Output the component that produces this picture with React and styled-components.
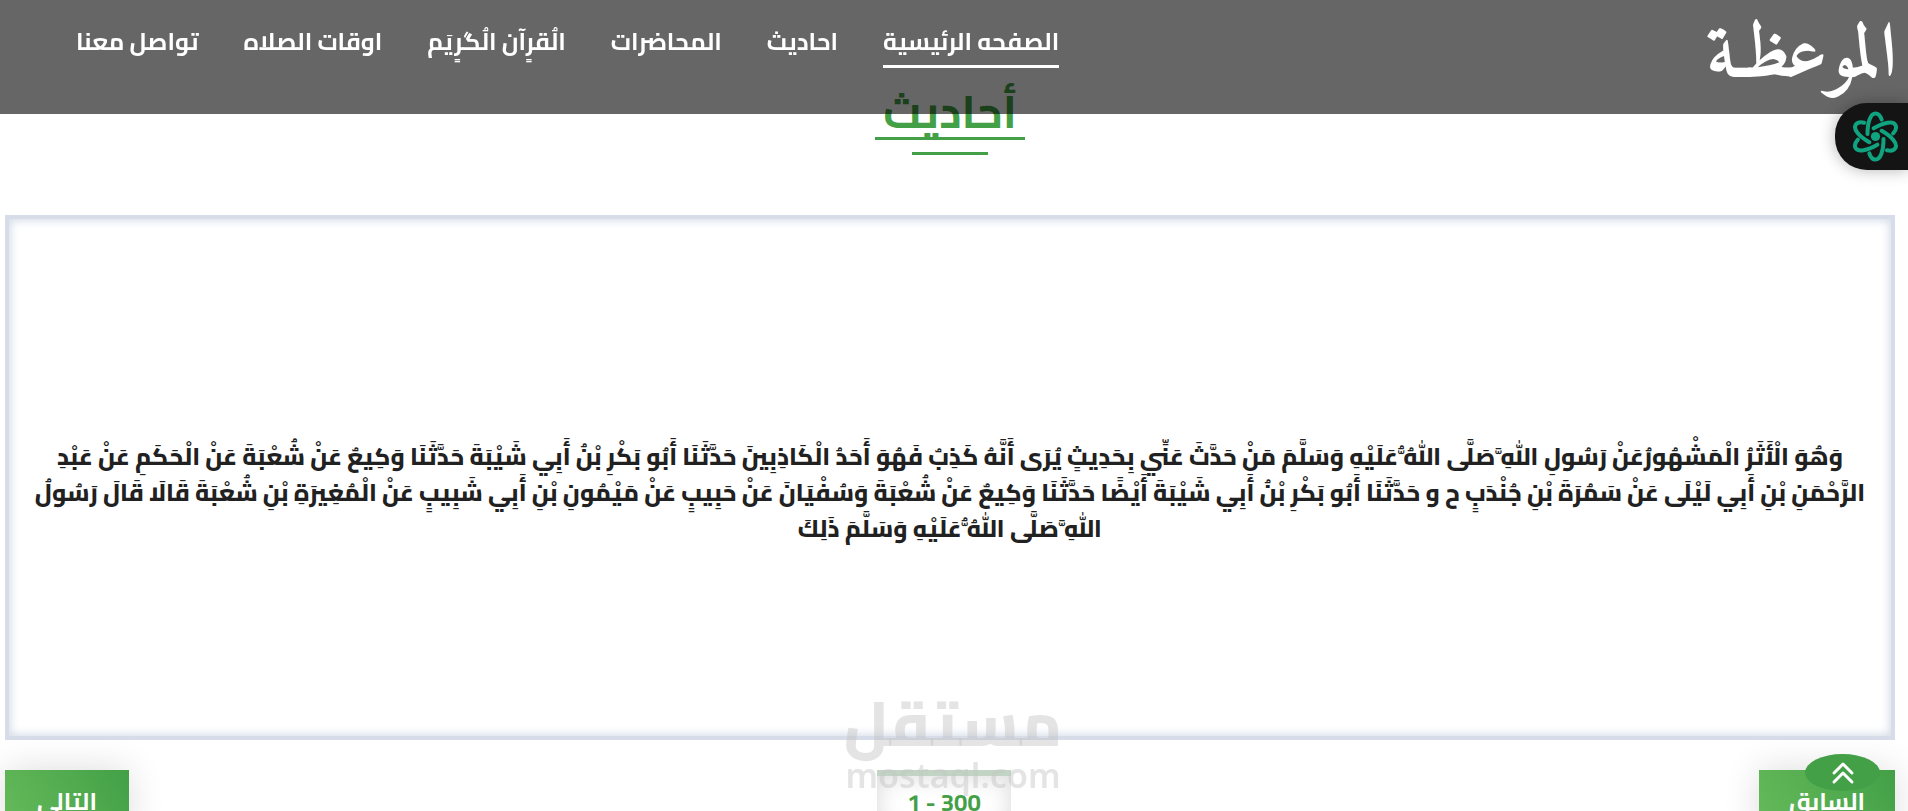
import React from "react";
import styled, { createGlobalStyle, css } from "styled-components";

const GlobalStyle = createGlobalStyle`
  * { box-sizing: border-box; }
  body {
    margin: 0;
    background: #fff;
    color: #212121;
    font-family: Cairo, "DejaVu Sans Condensed", "DejaVu Sans", sans-serif;
    font-weight: 700;
  }
`;

const Page = styled.div`
  height: 100vh;
  overflow: hidden;
`;

const Header = styled.header`
  position: fixed;
  inset: 0 0 auto 0;
  z-index: 10;
  height: 114px;
  display: flex;
  justify-content: space-between;
  align-items: flex-start;
  padding: 0 11px 0 76px;
  background: rgba(0, 0, 0, 0.6);
`;

const Logo = styled.a`
  color: #fff;
  font-family: Amiri, "Scheherazade New", "Noto Naskh Arabic", "Aref Ruqaa", Cairo, "DejaVu Sans", serif;
  font-size: 76px;
  line-height: 116px;
  font-weight: 700;
  text-decoration: none;
`;

const Nav = styled.nav`
  display: flex;
  gap: 45px;
  padding-top: 20px;
`;

const NavLink = styled.a`
  color: #fff;
  font-size: 24px;
  line-height: 43px;
  padding-bottom: 2px;
  white-space: nowrap;
  text-decoration: none;
  border-bottom: 3px solid ${(p) => (p.$active ? "#fff" : "transparent")};
`;

const Main = styled.main`
  padding: 86px 13px 0 5px;
`;

const Title = styled.h1`
  width: 150px;
  margin: 0 auto;
  color: #43a047;
  font-size: 45px;
  line-height: 51px;
  text-align: center;
  white-space: nowrap;
  border-bottom: 3px solid #43a047;
`;

const TitleRule = styled.hr`
  width: 76px;
  height: 3px;
  margin: 12px auto 60px;
  border: 0;
  background: #43a047;
`;

const HadithBox = styled.section`
  height: 525px;
  display: flex;
  align-items: center;
  justify-content: center;
  border: 4px solid #d6dde8;
  box-shadow: inset 0 0 8px 2px #d6dde8;
`;

const HadithText = styled.p`
  margin: 0;
  padding-top: 30px;
  font-size: 24px;
  font-weight: 800;
  line-height: 36px;
  text-align: center;
  white-space: nowrap;
`;

const Pager = styled.div`
  display: flex;
  justify-content: space-between;
  align-items: flex-start;
  margin-top: 30px;
`;

const pagerItem = css`
  height: 64px;
  padding: 0;
  border: 0;
  font-family: inherit;
  font-weight: 700;
  font-size: 24px;
  line-height: 64px;
  text-align: center;
`;

const PagerButton = styled.button`
  ${pagerItem}
  width: ${(p) => p.$width}px;
  color: #fff;
  background: linear-gradient(60deg, #66bb5a, #43a047);
  box-shadow: 0 0 36px rgba(0, 0, 0, 0.14);
`;

const Counter = styled.output`
  ${pagerItem}
  width: 134px;
  color: #43a047;
  line-height: 54px;
  border-top: 6px solid #c2d5c4;
  box-shadow: inset 0 0 24px rgba(0, 0, 0, 0.16);
`;

const Assistant = styled.button`
  position: fixed;
  top: 103px;
  right: 0;
  z-index: 20;
  width: 73px;
  height: 67px;
  display: flex;
  align-items: center;
  padding: 0 0 0 17px;
  border: 0;
  border-radius: 32px 0 0 32px;
  background: #141414;
  box-shadow: 0 0 16px rgba(0, 0, 0, 0.3);
`;

const ToTop = styled.a`
  position: fixed;
  right: 28px;
  bottom: 20px;
  width: 75px;
  height: 37px;
  display: flex;
  align-items: center;
  justify-content: center;
  border-radius: 50%;
  background: #43a047;
`;

const Watermark = styled.div`
  position: fixed;
  left: 50%;
  bottom: 18px;
  z-index: 5;
  width: 212px;
  margin-left: -107px;
  display: flex;
  flex-direction: column;
  align-items: center;
  color: rgba(196, 196, 196, 0.45);
  pointer-events: none;
`;

const WatermarkArabic = styled.span`
  font-size: 62px;
  font-weight: 800;
  line-height: 68px;
`;

const WatermarkLatin = styled.span`
  font-family: "Noto Sans", sans-serif;
  font-weight: 600;
  font-size: 34px;
  line-height: 36px;
`;

const links = [
  "الصفحه الرئيسية",
  "احاديث",
  "المحاضرات",
  "الُقرٍآن الُگرٍيَم",
  "اوقات الصلاه",
  "تواصل معنا",
];

const lines = [
  "وَهُوَ الْأَثَرُ الْمَشْهُورُعَنْ رَسُولِ اللهِ َّصَلَّى اللهُ ُّعَلَيْهِ وَسَلَّمَ مَنْ حَدَّثَ عَنِّي بِحَدِيثٍ يُرَى أَنَّهُ كَذِبٌ فَهُوَ أَحَدُ الْكَاذِبِينَ حَدَّثَنَا أَبُو بَكْرِ بْنُ أَبِي شَيْبَةَ حَدَّثَنَا وَكِيعٌ عَنْ شُعْبَةَ عَنْ الْحَكَمِ عَنْ عَبْدِ",
  "الرَّحْمَنِ بْنِ أَبِي لَيْلَى عَنْ سَمُرَةَ بْنِ جُنْدَبٍ ح و حَدَّثَنَا أَبُو بَكْرِ بْنُ أَبِي شَيْبَةَ أَيْضًا حَدَّثَنَا وَكِيعٌ عَنْ شُعْبَةَ وَسُفْيَانَ عَنْ حَبِيبٍ عَنْ مَيْمُونِ بْنِ أَبِي شَبِيبٍ عَنْ الْمُغِيرَةِ بْنِ شُعْبَةَ قَالَا قَالَ رَسُولُ",
  "اللهِ َّصَلَّى اللهُ ُّعَلَيْهِ وَسَلَّمَ ذَلِكَ",
];

function AtomIcon() {
  return (
    <svg width="47" height="52" viewBox="0 0 47 52" fill="none" stroke="#10a37f" strokeWidth="4" strokeLinecap="round" aria-hidden="true">
      <circle cx="23.5" cy="25.5" r="4.6" fill="#10a37f" stroke="none" />
      {[0, 60, 120, 180, 240, 300].map((a) => (
        <path key={a} transform={`rotate(${a} 23.5 25.5)`} d="M15.500 23C15.500 11 18.500 2.500 23.500 2.500c2.800 0 5 2.400 6.200 6.200" />
      ))}
    </svg>
  );
}

export default function App() {
  return (
    <Page>
      <GlobalStyle />
      <Header>
        <Nav dir="rtl" lang="ar">
          {links.map((label, i) => (
            <NavLink key={label} href="#" $active={i === 0}>{label}</NavLink>
          ))}
        </Nav>
        <Logo href="#" dir="rtl" lang="ar">الموعظـة</Logo>
      </Header>
      <Main lang="ar">
        <Title>أحاديث</Title>
        <TitleRule />
        <HadithBox>
          <HadithText dir="rtl">
            {lines.map((line) => (
              <React.Fragment key={line}>{line}<br /></React.Fragment>
            ))}
          </HadithText>
        </HadithBox>
        <Pager dir="rtl">
          <PagerButton type="button" $width={136}>السابق</PagerButton>
          <Counter dir="ltr">1 - 300</Counter>
          <PagerButton type="button" $width={124}>التالي</PagerButton>
        </Pager>
      </Main>
      <Watermark>
        <WatermarkArabic lang="ar">مستقل</WatermarkArabic>
        <WatermarkLatin>mostaql.com</WatermarkLatin>
      </Watermark>
      <Assistant type="button" aria-label="Assistant"><AtomIcon /></Assistant>
      <ToTop href="#" aria-label="Top">
        <svg width="24" height="24" viewBox="0 0 24 24" fill="none" stroke="#fff" strokeWidth="3" strokeLinecap="round" strokeLinejoin="round" aria-hidden="true">
          <path d="M3 12l9-9 9 9M3 21l9-9 9 9" />
        </svg>
      </ToTop>
    </Page>
  );
}
